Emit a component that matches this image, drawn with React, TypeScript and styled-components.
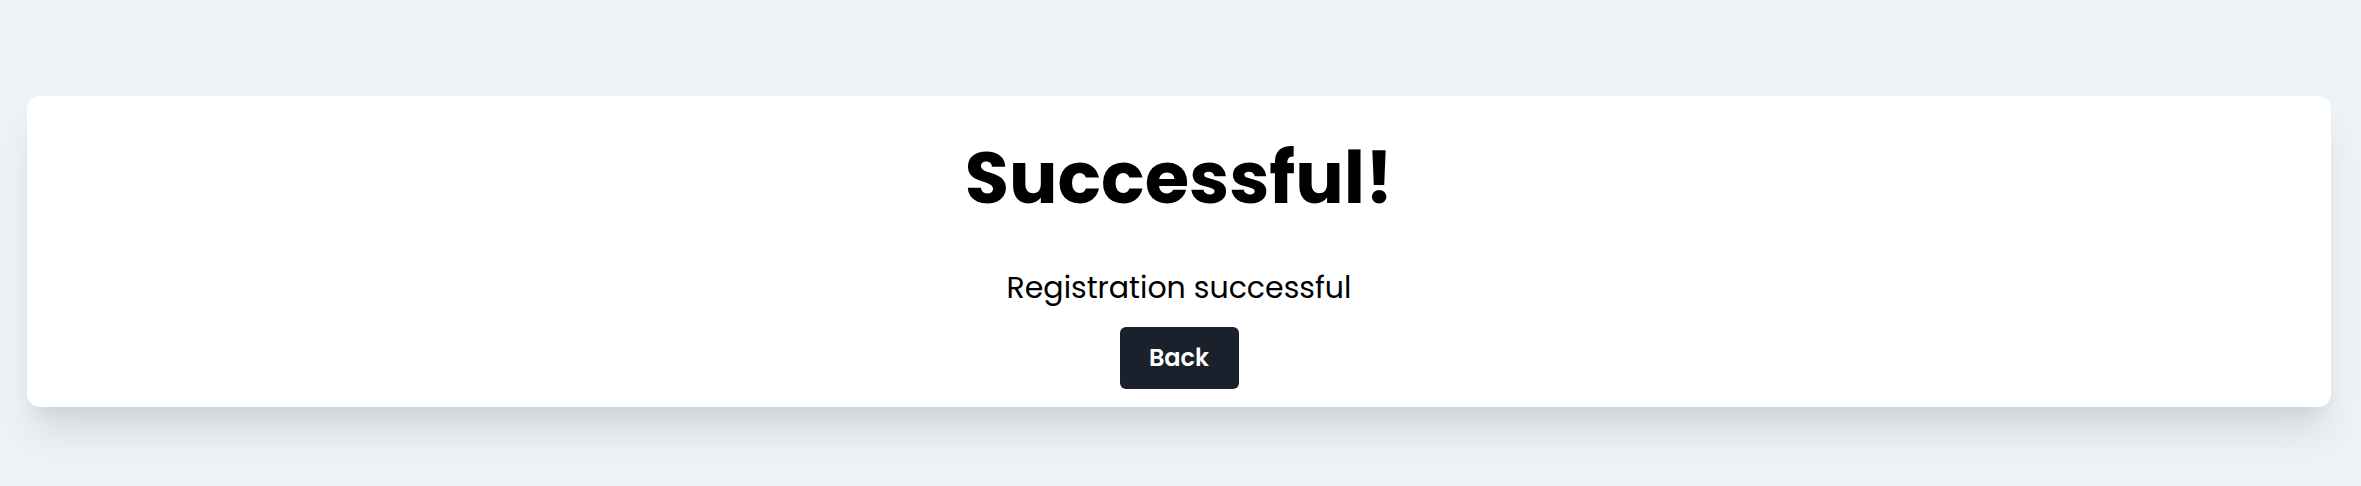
import styled, { createGlobalStyle } from "styled-components";

const GlobalStyle = createGlobalStyle`
  html, body {
    margin: 0;
    padding: 0;
    background: #edf2f7;
    font-family: "Poppins", Inter, "Noto Sans", sans-serif;
  }
`;

const Page = styled.main`
  min-height: 486px;
  box-sizing: border-box;
  padding: 96px 30px 0 27px;
`;

const Card = styled.section`
  background: #ffffff;
  border-radius: 13px;
  box-shadow: 0 30px 37px -7px rgba(0, 0, 0, 0.1),
    0 15px 15px -7px rgba(0, 0, 0, 0.04);
  padding: 46px 0 18px;
  display: flex;
  flex-direction: column;
  align-items: center;
`;

const Title = styled.h1`
  margin: 0;
  font-size: 72px;
  line-height: 1;
  font-weight: 700;
  color: #000;
`;

const Message = styled.p`
  margin: 59px 0 0;
  font-size: 30px;
  line-height: 30px;
  font-weight: 400;
  color: #000;
`;

const BackButton = styled.button`
  margin-top: 24px;
  font-family: inherit;
  font-size: 24px;
  line-height: 36px;
  font-weight: 600;
  color: #ffffff;
  background: #1a202c;
  border: none;
  border-radius: 6px;
  padding: 13px 0;
  width: 119px;
  cursor: pointer;
`;

export default function App() {
  return (
    <>
      <GlobalStyle />
      <Page>
        <Card>
          <Title>Successful!</Title>
          <Message>Registration successful</Message>
          <BackButton>Back</BackButton>
        </Card>
      </Page>
    </>
  );
}
